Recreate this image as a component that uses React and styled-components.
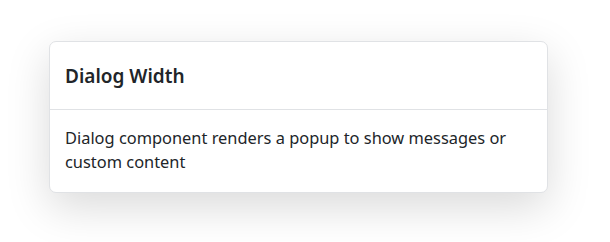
import React from 'react'
import { createGlobalStyle, styled } from 'styled-components'

const GlobalStyle = createGlobalStyle`
  html, body {
    margin: 0;
    background: #ffffff;
  }
  body {
    font-family: "Noto Sans", "Open Sans", sans-serif;
    color: #212529;
  }
`

const Page = styled.div`
  width: 610px;
  height: 242px;
  padding: 41px 0 0 49px;
  box-sizing: border-box;
  overflow: hidden;
`

const Dialog = styled.div`
  width: 499px;
  box-sizing: border-box;
  background: #ffffff;
  border: 1px solid #e0e2e5;
  border-radius: 7px;
  box-shadow: 0 14px 44px rgba(0, 0, 0, 0.15);
`

const Header = styled.div`
  height: 68px;
  padding: 2px 15px 0;
  box-sizing: border-box;
  display: flex;
  align-items: center;
  border-bottom: 1px solid #e0e2e5;
`

const Title = styled.h5`
  margin: 0;
  font-size: 19px;
  font-weight: 600;
  line-height: 1.2;
`

const Body = styled.div`
  padding: 16px 15px 18px;
  font-size: 16.4px;
  line-height: 24px;
`

export default function App() {
  return (
    <>
      <GlobalStyle />
      <Page>
        <Dialog>
          <Header>
            <Title>Dialog Width</Title>
          </Header>
          <Body>
            Dialog component renders a popup to show messages or custom content
          </Body>
        </Dialog>
      </Page>
    </>
  )
}
